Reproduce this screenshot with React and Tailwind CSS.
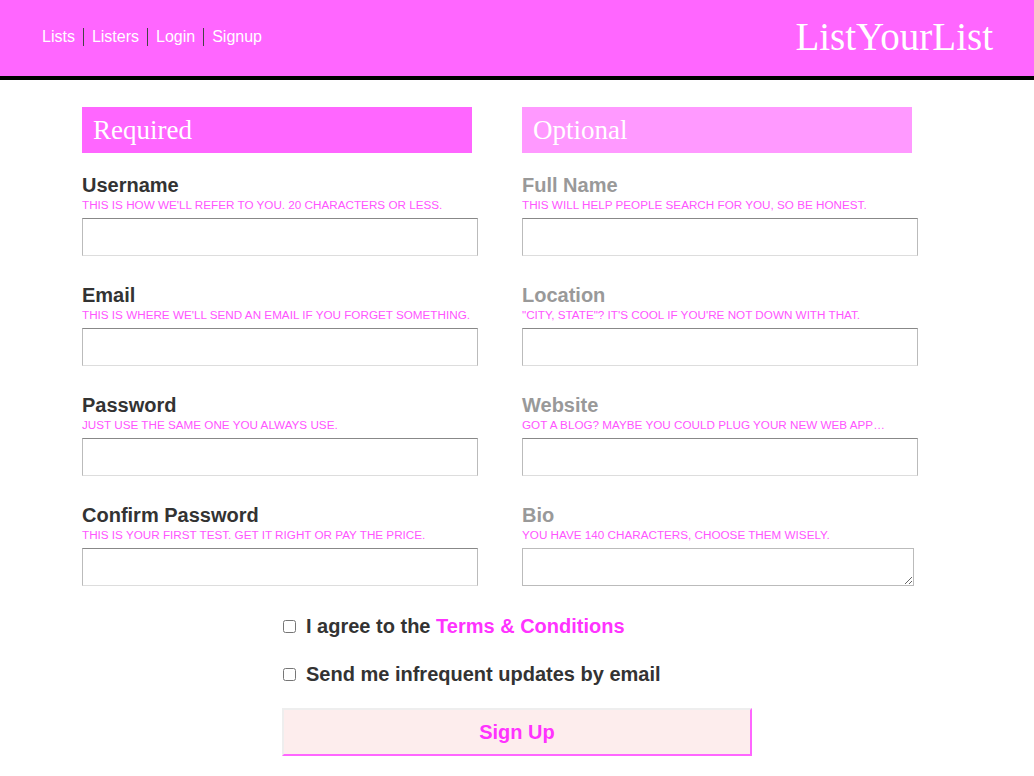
const required = [
  { label: 'Username', hint: "This is how we'll refer to you. 20 characters or less." },
  { label: 'Email', hint: "This is where we'll send an email if you forget something." },
  { label: 'Password', hint: 'Just use the same one you always use.' },
  { label: 'Confirm Password', hint: 'This is your first test. Get it right or pay the price.' },
];

const optional = [
  { label: 'Full Name', hint: 'This will help people search for you, so be honest.' },
  { label: 'Location', hint: '"City, State"? It\'s cool if you\'re not down with that.' },
  { label: 'Website', hint: 'Got a blog? Maybe you could plug your new web app…' },
  { label: 'Bio', hint: 'You have 140 characters, choose them wisely.', textarea: true },
];

function Field({ label, hint, textarea, muted }) {
  return (
    <div className="mb-[27px]">
      <div className={`text-[20px] font-bold leading-[24px] ${muted ? 'text-[#999]' : 'text-[#333]'}`}>{label}</div>
      <div className="mt-px text-[11.7px] uppercase leading-[14px] text-[#ff55ff]">{hint}</div>
      {textarea ? (
        <textarea className="mt-[6px] block h-[38px] w-[392px] resize-y border border-[#bbb] bg-white" />
      ) : (
        <input
          type="text"
          className="mt-[6px] block h-[38px] w-[396px] border border-t-[#888] border-x-[#bbb] border-b-[#ddd] bg-white"
        />
      )}
    </div>
  );
}

export default function App() {
  const links = ['Lists', 'Listers', 'Login', 'Signup'];

  return (
    <div className="min-h-[776px] bg-white font-['Liberation_Sans',Arial,sans-serif]">
      {/* Header */}
      <div className="flex h-[80px] items-center justify-between border-b-4 border-black bg-[#ff66ff] pb-[3px] pl-[42px] pr-[41px]">
        <nav className="flex items-center text-[16px] text-white">
          {links.map((l, i) => (
            <div key={l} className="flex items-center">
              {i > 0 && <span className="mx-[8px] h-[18px] w-px bg-[#444]" />}
              <span>{l}</span>
            </div>
          ))}
        </nav>
        <div className="font-['Liberation_Serif',Georgia,serif] text-[39px] leading-none text-white">ListYourList</div>
      </div>

      {/* Form */}
      <div className="flex gap-[44px] pl-[82px] pt-[27px]">
        <div className="w-[396px]">
          <div className="mb-[20px] h-[46px] w-[390px] bg-[#ff66ff] pl-[11px] font-['Liberation_Serif',Georgia,serif] text-[27px] leading-[46px] text-white">
            Required
          </div>
          {required.map((f) => (
            <Field key={f.label} {...f} />
          ))}
        </div>
        <div className="w-[396px]">
          <div className="mb-[20px] h-[46px] w-[390px] bg-[#ff99ff] pl-[11px] font-['Liberation_Serif',Georgia,serif] text-[27px] leading-[46px] text-white">
            Optional
          </div>
          {optional.map((f) => (
            <Field key={f.label} {...f} muted />
          ))}
        </div>
      </div>

      <div className="-mt-px ml-[282px] w-[470px]">
        <label className="flex h-[28px] items-center text-[20px] font-bold text-[#333]">
          <input type="checkbox" className="ml-px mr-[10px] h-[13px] w-[13px]" />
          I agree to the&nbsp;<span className="text-[#ff33ff]">Terms &amp; Conditions</span>
        </label>
        <label className="mt-[20px] flex h-[28px] items-center text-[20px] font-bold text-[#333]">
          <input type="checkbox" className="ml-px mr-[10px] h-[13px] w-[13px]" />
          Send me infrequent updates by email
        </label>
        <button className="mt-[20px] block h-[48px] w-[470px] border-[2px] border-t-[#eee] border-l-[#eee] border-r-[#ff66ff] border-b-[#ff66ff] bg-[#fdeded] text-[20px] font-bold text-[#ff33ff]">
          Sign Up
        </button>
      </div>
    </div>
  );
}
